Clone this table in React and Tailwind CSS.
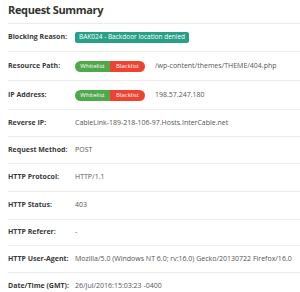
const rows = [
  { label: 'Blocking Reason:', h: 'h-[28px]', badge: 'BAK024 - Backdoor location denied' },
  { label: 'Resource Path:', h: 'h-[29px]', pills: true, value: '/wp-content/themes/THEME/404.php' },
  { label: 'IP Address:', h: 'h-[29px]', pills: true, value: '198.57.247.180' },
  { label: 'Reverse IP:', h: 'h-[27px]', value: 'CableLink-189-218-106-97.Hosts.InterCable.net' },
  { label: 'Request Method:', h: 'h-[27px]', value: 'POST' },
  { label: 'HTTP Protocol:', h: 'h-[28px]', value: 'HTTP/1.1' },
  { label: 'HTTP Status:', h: 'h-[28px]', value: '403' },
  { label: 'HTTP Referer:', h: 'h-[26px]', value: '-' },
  { label: 'HTTP User-Agent:', h: 'h-[27px]', value: 'Mozilla/5.0 (Windows NT 6.0; rv:16.0) Gecko/20130722 Firefox/16.0' },
  { label: 'Date/Time (GMT):', h: 'h-[28px]', value: '26/Jul/2016:15:03:23 -0400' },
]

const Pills = () => (
  <span className="flex h-[11px] rounded-full overflow-hidden text-[6px] text-white leading-none mr-[10px] shrink-0">
    <span className="w-[35px] flex items-center justify-center bg-[#4fa84a]">Whitelist</span>
    <span className="w-[35px] flex items-center justify-center bg-[#ee4330]">Blacklist</span>
  </span>
)

export default function App() {
  return (
    <div className="w-[300px] h-[292px] bg-white overflow-hidden pl-[8px] font-['Open_Sans',sans-serif]">
      <h2 className="h-[23px] pt-[3px] text-[11px] tracking-[-0.35px] font-bold text-[#333] leading-[14px]">Request Summary</h2>
      <div className="w-[310px]">
        {rows.map((r) => (
          <div key={r.label} className={`${r.h} border-t border-[#ececec] flex items-center text-[7px] whitespace-nowrap`}>
            <span className="w-[67px] shrink-0 font-bold text-[#3a3a3a]">{r.label}</span>
            {r.badge && (
              <span className="bg-[#27a086] text-white text-[6.5px] leading-none px-[4px] py-[2px] rounded-[2px]">{r.badge}</span>
            )}
            {r.pills && <Pills />}
            {r.value && <span className="text-[#555]">{r.value}</span>}
          </div>
        ))}
      </div>
    </div>
  )
}
